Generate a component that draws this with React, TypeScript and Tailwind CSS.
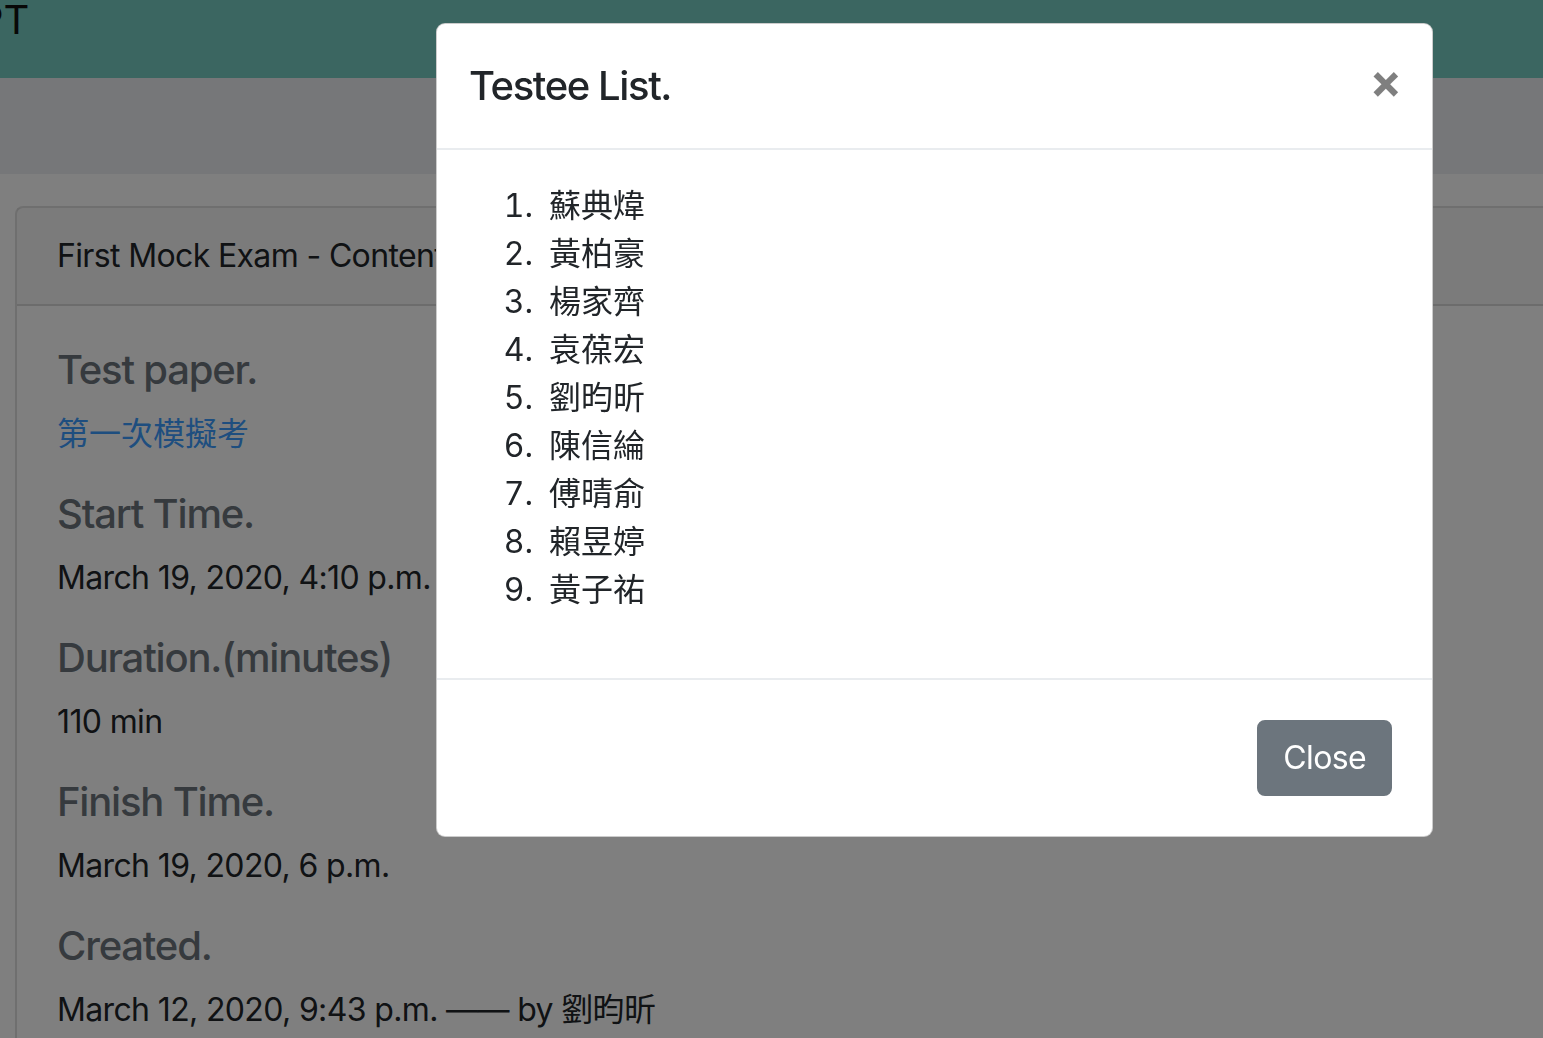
import React from 'react';

const testees = ['蘇典煒', '黃柏豪', '楊家齊', '袁葆宏', '劉昀昕', '陳信綸', '傅晴俞', '賴昱婷', '黃子祐'];

const details = [
  { label: 'Start Time.', value: 'March 19, 2020, 4:10 p.m.' },
  { label: 'Duration.(minutes)', value: '110 min' },
  { label: 'Finish Time.', value: 'March 19, 2020, 6 p.m.' },
  { label: 'Created.', value: 'March 12, 2020, 9:43 p.m. —— by 劉昀昕' },
];

const font = { fontFamily: 'Inter, "Noto Sans CJK TC", sans-serif' };

const TesteeModal: React.FC = () => (
  <div className="fixed inset-0 bg-black/50">
    <div className="absolute left-[436px] top-[23px] w-[997px] bg-white border border-black/20 rounded-[9px] text-[#212529]">
      <div className="flex items-start justify-between p-8 border-b-2 border-[#e9ecef]">
        <h5 className="text-[40px] leading-[60px] font-medium tracking-[-0.035em]">Testee List.</h5>
        <button className="-mt-[5px] text-[48px] leading-[60px] font-bold text-black/50 -mr-[2px]">×</button>
      </div>
      <div className="p-8">
        <ol className="list-none mb-8 text-[32px] leading-[48px]">
          {testees.map((name, i) => (
            <li key={name} className="flex">
              <span className="w-[64px] text-right tabular-nums">{i + 1}.</span>
              <span className="ml-[16px]">{name}</span>
            </li>
          ))}
        </ol>
      </div>
      <div className="flex justify-end p-8 border-t-2 border-[#e9ecef]">
        <button className="m-2 px-6 py-3 border-2 border-[#6c757d] bg-[#6c757d] text-white text-[32px] leading-[48px] tracking-[-0.02em] rounded-[8px]">
          Close
        </button>
      </div>
    </div>
  </div>
);

export default function App() {
  return (
    <div className="relative w-full h-screen overflow-hidden bg-white" style={font}>
      <nav className="flex items-start h-[78px] bg-[#76ccc2]">
        <span className="-ml-[22px] -mt-[4px] text-[40px] leading-[48px] text-[#111]">PT</span>
      </nav>
      <div className="h-[96px] bg-[#eceef3]" />
      <div className="pt-8 pl-[15px]">
        <div className="w-[1600px] border-2 border-black/[0.125] rounded-[8px]">
          <div className="px-10 py-6 bg-black/[0.03] border-b-2 border-black/[0.125] text-[32px] leading-[48px] tracking-[-0.02em] text-[#212529]">
            First Mock Exam - Content
          </div>
          <div className="p-10">
            <h5 className="text-[40px] leading-[48px] font-medium tracking-[-0.03em] text-[#6c757d] mb-4">Test paper.</h5>
            <p className="mb-8 text-[32px] leading-[48px]">
              <a className="text-[#3c9cff]">第一次模擬考</a>
            </p>
            {details.map((d) => (
              <div key={d.label}>
                <h5 className="text-[40px] leading-[48px] font-medium tracking-[-0.03em] text-[#6c757d] mb-4">{d.label}</h5>
                <p className="mb-8 text-[32px] leading-[48px] tracking-[-0.02em] text-[#212529]">{d.value}</p>
              </div>
            ))}
          </div>
        </div>
      </div>
      <TesteeModal />
    </div>
  );
}
